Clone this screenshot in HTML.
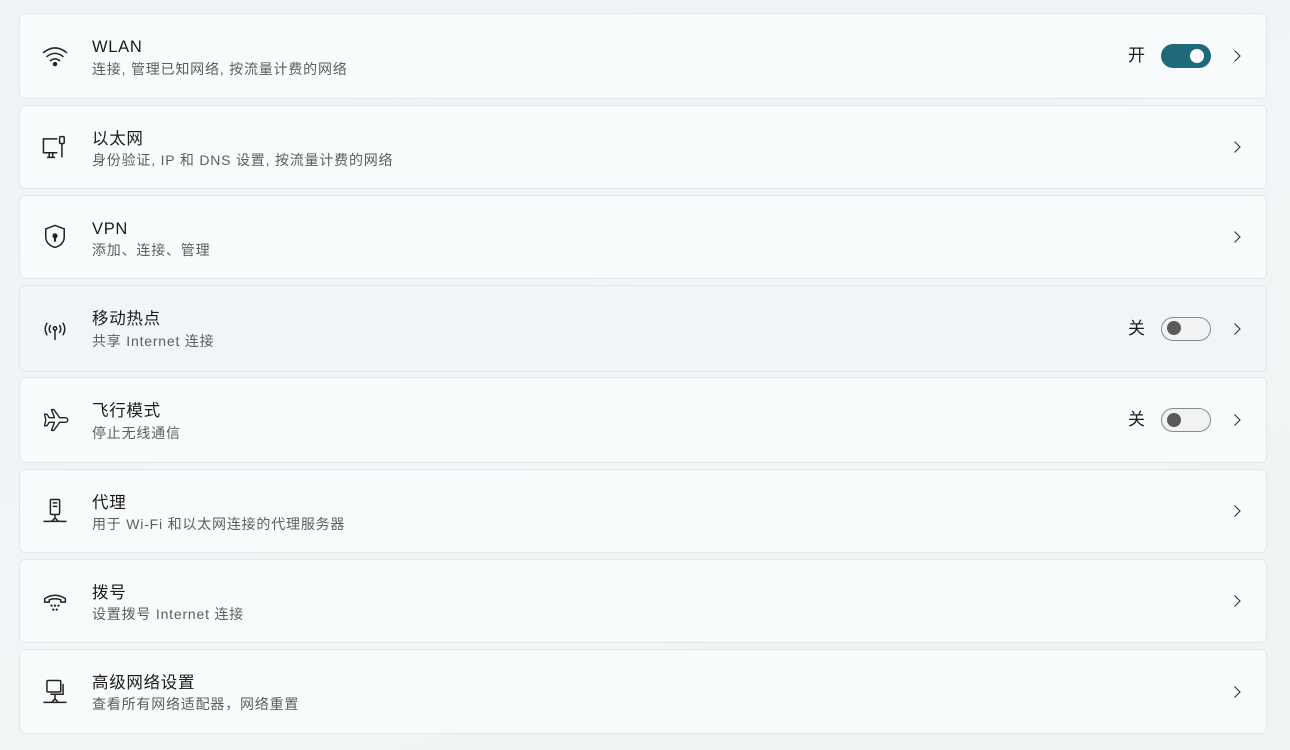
<!DOCTYPE html>
<html><head><meta charset="utf-8"><style>
*{margin:0;padding:0;box-sizing:border-box}
body{width:1290px;height:750px;overflow:hidden;background:linear-gradient(160deg,#edf3f6 0%,#f1f5f7 50%,#eef5f2 100%);font-family:"Liberation Sans","Noto Sans CJK SC",sans-serif;position:relative}
.card{position:absolute;left:19px;width:1248px;background:#f8fbfc;border:1px solid #e2e8ea;border-radius:6px}
.card.h{background:#f1f5f7}
.ic{position:absolute;left:20px;top:50%;transform:translateY(-50%);width:30px;height:30px}
.t{position:absolute;left:72px;font-size:16.5px;line-height:20px;color:#1b1b1b;white-space:nowrap;letter-spacing:0.7px}
.s{position:absolute;left:72px;font-size:14px;line-height:18px;color:#5d5d5d;white-space:nowrap;letter-spacing:0.8px}
.chev{position:absolute;left:1211px;top:50%;transform:translateY(-50%);width:12px;height:16px}
.lbl{position:absolute;left:1108px;top:50%;transform:translateY(-50%);font-size:17px;line-height:20px;color:#1b1b1b}
.tg{position:absolute;left:1141px;top:50%;transform:translateY(-50%);width:50px;height:24px;border-radius:12px}
.on{background:#1f6a7a}
.on::after{content:"";position:absolute;right:7px;top:5px;width:14px;height:14px;border-radius:50%;background:#fff}
.off{border:1.5px solid #8a8a8a;background:#f0f2f3}
.off::after{content:"";position:absolute;left:5px;top:3.5px;width:14px;height:14px;border-radius:50%;background:#5a5a5a}
</style></head><body>
<svg width="0" height="0" style="position:absolute"><defs><symbol id="cv" viewBox="0 0 12 16"><path d="M3.5 2.5l5.5 5.5-5.5 5.5" fill="none" stroke="#333" stroke-width="1.1"/></symbol></defs></svg>

<div class="card" style="top:13px;height:86px">
<svg class="ic" viewBox="0 0 26 26" fill="none" stroke="#222" stroke-width="1.3" stroke-linecap="round"><path d="M3 10q10-8 20 0M6 13.5q7-5.5 14 0M9 17q4-3 8 0"/><circle cx="13" cy="20" r="1.3" fill="#222"/></svg>
<div class="t" style="top:23px">WLAN</div><div class="s" style="top:46px">连接, 管理已知网络, 按流量计费的网络</div>
<div class="lbl">开</div><div class="tg on"></div>
<svg class="chev"><use href="#cv"/></svg></div>

<div class="card" style="top:105px;height:84px">
<svg class="ic" viewBox="0 0 26 26" fill="none" stroke="#222" stroke-width="1.3"><path d="M15 6H3v12h12M6 22h7M8 18v4M11 18v4"/><rect x="17" y="4" width="4" height="6" rx="1"/><path d="M19 10v12"/></svg>
<div class="t" style="top:23px">以太网</div><div class="s" style="top:45px">身份验证, IP 和 DNS 设置, 按流量计费的网络</div>
<svg class="chev"><use href="#cv"/></svg></div>

<div class="card" style="top:195px;height:84px">
<svg class="ic" viewBox="0 0 26 26" fill="none" stroke="#222" stroke-width="1.3"><path d="M13 3l8 3v7c0 5-4 8-8 9-4-1-8-4-8-9V6z"/><circle cx="13" cy="12" r="1.6" fill="#222"/><path d="M13 13v4" stroke-width="1.8"/></svg>
<div class="t" style="top:23px">VPN</div><div class="s" style="top:45px">添加、连接、管理</div>
<svg class="chev"><use href="#cv"/></svg></div>

<div class="card h" style="top:285px;height:87px">
<svg class="ic" viewBox="0 0 26 26" fill="none" stroke="#222" stroke-width="1.3" stroke-linecap="round"><path d="M6 8q-3 5 0 10M20 8q3 5 0 10M9 10q-2 3 0 6M17 10q2 3 0 6M13 14v8"/><circle cx="13" cy="12.5" r="1.5"/></svg>
<div class="t" style="top:23px">移动热点</div><div class="s" style="top:46px">共享 Internet 连接</div>
<div class="lbl">关</div><div class="tg off"></div>
<svg class="chev"><use href="#cv"/></svg></div>

<div class="card" style="top:377px;height:86px">
<svg class="ic" viewBox="0 0 26 26" fill="none" stroke="#222" stroke-width="1.2" stroke-linejoin="round"><path d="M10 4h2l5 7h5a2 2 0 010 4h-5l-5 7h-2l2.5-7H8l-2 3H4l1-5-1-5h2l2 3h4.5z"/></svg>
<div class="t" style="top:23px">飞行模式</div><div class="s" style="top:46px">停止无线通信</div>
<div class="lbl">关</div><div class="tg off"></div>
<svg class="chev"><use href="#cv"/></svg></div>

<div class="card" style="top:469px;height:84px">
<svg class="ic" viewBox="0 0 26 26" fill="none" stroke="#222" stroke-width="1.3"><rect x="9" y="3" width="8" height="13" rx="1"/><path d="M11 6h4M11 9h4M13 16v3M3 22h20M10 22l3-3 3 3"/></svg>
<div class="t" style="top:23px">代理</div><div class="s" style="top:45px">用于 Wi-Fi 和以太网连接的代理服务器</div>
<svg class="chev"><use href="#cv"/></svg></div>

<div class="card" style="top:559px;height:84px">
<svg class="ic" viewBox="0 0 26 26" fill="none" stroke="#222" stroke-width="1.3" stroke-linejoin="round"><path d="M4 14v-3q9-6 18 0v3h-4v-2q-5-2-10 0v2z"/><g fill="#222" stroke="none"><circle cx="10" cy="17" r="1"/><circle cx="13" cy="17" r="1"/><circle cx="16" cy="17" r="1"/><circle cx="11.5" cy="20.5" r="1"/><circle cx="14.5" cy="20.5" r="1"/></g></svg>
<div class="t" style="top:23px">拨号</div><div class="s" style="top:45px">设置拨号 Internet 连接</div>
<svg class="chev"><use href="#cv"/></svg></div>

<div class="card" style="top:649px;height:85px">
<svg class="ic" viewBox="0 0 26 26" fill="none" stroke="#222" stroke-width="1.3"><rect x="6" y="3" width="12" height="10" rx="1"/><path d="M20 6v9H9M13 15v4M3 22h20M10 22l3-3 3 3"/></svg>
<div class="t" style="top:23px">高级网络设置</div><div class="s" style="top:45px">查看所有网络适配器，网络重置</div>
<svg class="chev"><use href="#cv"/></svg></div>
</body></html>
